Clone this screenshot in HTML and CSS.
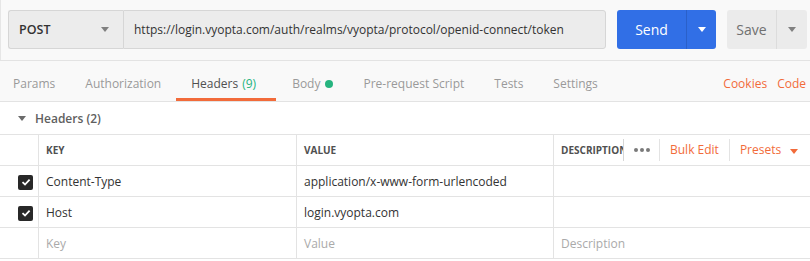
FILE: index.html
```html
<!DOCTYPE html>
<html lang="en">
<head>
    <meta charset="UTF-8">
    <title>Request - Headers</title>
    <link rel="stylesheet" href="styles.css">
</head>
<body>
    <div class="request-bar">
        <div class="method">
            <span>POST</span>
            <span class="caret grey"></span>
        </div>
        <div class="url">https://login.vyopta.com/auth/realms/vyopta/protocol/openid-connect/token</div>
        <div class="send">
            <span class="send-label">Send</span>
            <span class="send-drop"><span class="caret white"></span></span>
        </div>
        <div class="save">
            <span class="save-label">Save</span>
            <span class="save-drop"><span class="caret grey"></span></span>
        </div>
    </div>

    <div class="tabs">
        <span class="tab">Params</span>
        <span class="tab">Authorization</span>
        <span class="tab active">Headers <span class="count">(9)</span></span>
        <span class="tab">Body <span class="dot"></span></span>
        <span class="tab">Pre-request Script</span>
        <span class="tab">Tests</span>
        <span class="tab">Settings</span>
        <span class="tab-links">
            <span>Cookies</span>
            <span>Code</span>
        </span>
    </div>

    <div class="section-title">
        <span class="caret dark"></span>
        <span>Headers (2)</span>
    </div>

    <table class="kv">
        <tr class="head">
            <td class="check"></td>
            <td class="col-key">KEY</td>
            <td class="col-value">VALUE</td>
            <td class="col-desc">
                <div class="desc-head">
                    <span class="desc-label">DESCRIPTION</span>
                    <span class="more"><i></i><i></i><i></i></span>
                    <span class="action">Bulk Edit</span>
                    <span class="action">Presets <span class="caret orange"></span></span>
                </div>
            </td>
        </tr>
        <tr>
            <td class="check"><span class="box">
                <svg width="10" height="8" viewBox="0 0 10 8"><path d="M1.5 4.2 L4 6.5 L8.6 1.6" fill="none" stroke="#fff" stroke-width="1.8"/></svg>
            </span></td>
            <td>Content-Type</td>
            <td>application/x-www-form-urlencoded</td>
            <td></td>
        </tr>
        <tr>
            <td class="check"><span class="box">
                <svg width="10" height="8" viewBox="0 0 10 8"><path d="M1.5 4.2 L4 6.5 L8.6 1.6" fill="none" stroke="#fff" stroke-width="1.8"/></svg>
            </span></td>
            <td>Host</td>
            <td>login.vyopta.com</td>
            <td></td>
        </tr>
        <tr class="placeholder">
            <td class="check"></td>
            <td>Key</td>
            <td>Value</td>
            <td>Description</td>
        </tr>
    </table>
</body>
</html>
```

FILE: styles.css
```css
body {
    margin: 0;
    font-family: "Open Sans", sans-serif;
    font-size: 12px;
    color: #505050;
    background-color: #fff;
}
.caret {
    display: inline-block;
    width: 0;
    height: 0;
    border-left: 4px solid transparent;
    border-right: 4px solid transparent;
    border-top: 5px solid #808080;
}
.caret.white {
    border-top-color: #fff;
}
.caret.dark {
    border-top-color: #6b6b6b;
}
.caret.orange {
    border-top-color: #f26b3a;
    margin-left: 6px;
}
.request-bar {
    display: flex;
    align-items: stretch;
    height: 60px;
    padding: 10px 0 0 7px;
    box-sizing: border-box;
    background-color: #f9f9f9;
    border-left: 1px solid #e6e6e6;
}
.request-bar > div {
    height: 39px;
    box-sizing: border-box;
}
.method {
    width: 115px;
    display: flex;
    align-items: center;
    justify-content: space-between;
    padding: 0 14px 0 10px;
    background-color: #ececec;
    border: 1px solid #d6d6d6;
    border-right: none;
    border-radius: 3px 0 0 3px;
    font-weight: 600;
    font-size: 12.5px;
    color: #333;
}
.url {
    width: 483px;
    display: flex;
    align-items: center;
    padding-left: 10px;
    background-color: #ececec;
    border: 1px solid #d6d6d6;
    border-radius: 0 3px 3px 0;
    color: #333;
    font-size: 12px;
}
.send {
    margin-left: 11px;
    width: 99px;
    display: flex;
    background-color: #316fe6;
    border-radius: 3px;
    color: #fff;
    font-size: 14px;
}
.send-label {
    width: 69px;
    display: flex;
    align-items: center;
    justify-content: center;
    border-right: 1px solid #2a60c9;
}
.send-drop {
    flex: 1;
    display: flex;
    align-items: center;
    justify-content: center;
}
.save {
    margin-left: 11px;
    width: 80px;
    display: flex;
    background-color: #ebebeb;
    border-radius: 3px;
    color: #707070;
    font-size: 14px;
}
.save-label {
    width: 49px;
    display: flex;
    align-items: center;
    justify-content: center;
    border-right: 1px solid #dcdcdc;
}
.save-drop {
    flex: 1;
    display: flex;
    align-items: center;
    justify-content: center;
}
.tabs {
    display: flex;
    align-items: stretch;
    height: 42px;
    box-sizing: border-box;
    background-color: #f9f9f9;
    border-top: 1px solid #e3e3e3;
    border-bottom: 1px solid #e3e3e3;
    padding-left: 0;
    color: #9a9a9a;
    font-size: 12px;
}
.tab {
    display: flex;
    align-items: center;
    padding: 8px 15px 0 15px;
    border-bottom: 3px solid transparent;
}
.tab:first-child {
    padding-left: 13px;
}
.tab.active {
    color: #505050;
    border-bottom-color: #f26b3a;
    padding-right: 20px;
}
.tab.active + .tab {
    padding-left: 16px;
}
.count {
    color: #26b47f;
    margin-left: 4px;
}
.dot {
    display: inline-block;
    width: 8px;
    height: 8px;
    border-radius: 50%;
    background-color: #26b47f;
    margin-left: 5px;
}
.tab-links {
    margin-left: auto;
    display: flex;
    align-items: center;
    gap: 10px;
    color: #f26b3a;
    padding-top: 5px;
    padding-right: 4px;
}
.section-title {
    display: flex;
    align-items: center;
    height: 32px;
    padding-left: 18px;
    gap: 9px;
    color: #606060;
    font-weight: 600;
}
.kv {
    border-collapse: collapse;
    width: 100%;
    table-layout: fixed;
}
.kv td {
    height: 30px;
    border-top: 1px solid #e3e3e3;
    border-bottom: 1px solid #e3e3e3;
    border-left: 1px solid #e3e3e3;
    padding: 0 0 0 7px;
    color: #333;
    white-space: nowrap;
    overflow: hidden;
}
.kv td.check {
    width: 20px;
    border-left: none;
    padding: 0 0 0 18px;
}
.kv td.col-key {
    width: 250px;
}
.kv td.col-value {
    width: 249px;
}
.kv .head td {
    font-size: 10px;
    font-weight: 700;
    color: #505050;
}
.desc-head {
    display: flex;
    align-items: center;
}
.desc-label {
    width: 62px;
    overflow: hidden;
    border-right: 1px solid #d6d6d6;
    line-height: 22px;
}
.more {
    display: flex;
    align-items: center;
    gap: 2px;
    height: 22px;
    padding: 0 9px 0 10px;
    border-right: 1px solid #e3e3e3;
}
.more i {
    display: block;
    width: 4px;
    height: 4px;
    border-radius: 50%;
    background-color: #7a7a7a;
}
.action {
    color: #f26b3a;
    font-weight: 400;
    font-size: 12px;
    padding: 0 10px;
    line-height: 22px;
}
.action + .action {
    border-left: 1px solid #e3e3e3;
}
.box {
    display: inline-flex;
    align-items: center;
    justify-content: center;
    width: 15px;
    height: 15px;
    border-radius: 2px;
    background-color: #282828;
    vertical-align: middle;
}
.placeholder td {
    color: #aaa;
}
```
